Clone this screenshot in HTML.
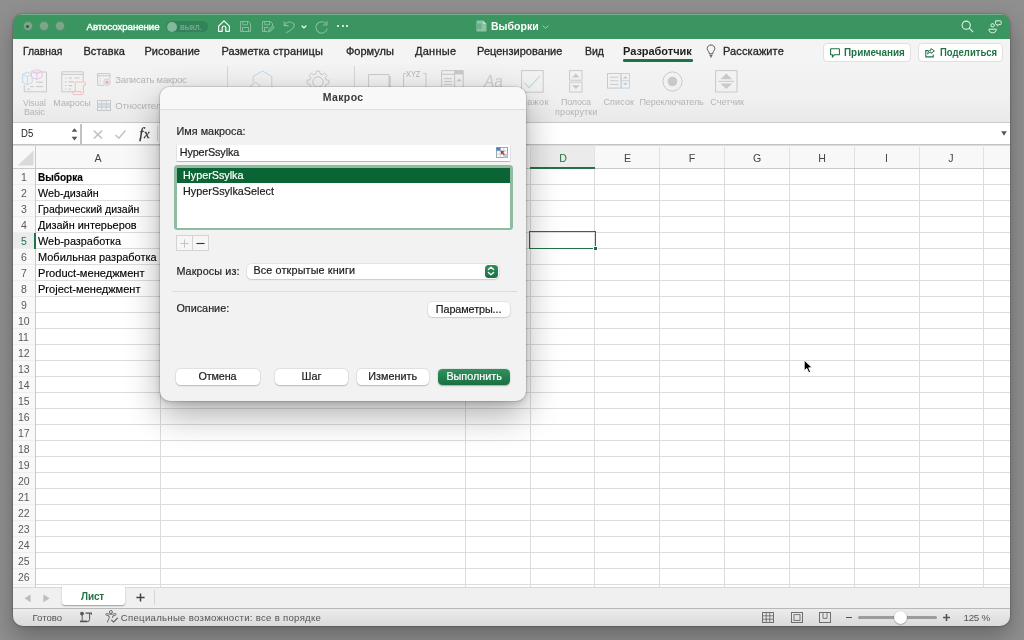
<!DOCTYPE html>
<html lang="ru"><head><meta charset="utf-8"><title>Выборки</title>
<style>
*{box-sizing:border-box;margin:0;padding:0}
html,body{width:1024px;height:640px;overflow:hidden}
body{background:#8f8f8f;font-family:"Liberation Sans",sans-serif;font-size:11px;color:#262626;position:relative}
.t{position:absolute;white-space:nowrap}
#win,#layer{will-change:transform}
.r{position:absolute;display:block}
#shadow{position:absolute;left:13px;top:14px;width:997px;height:612px;border-radius:10px;box-shadow:0 0 0 1px rgba(0,0,0,.10),0 11px 24px rgba(0,0,0,.27),0 1px 5px rgba(0,0,0,.09)}
#win{position:absolute;left:0;top:0;width:1024px;height:640px;clip-path:inset(14px 14px 14px 13px round 10px);background:#f3f3f3}
#dlg{position:absolute;left:160px;top:87px;width:366px;height:314px;border-radius:10px;background:#f2f2f2;box-shadow:0 0 0 1px rgba(0,0,0,.10),0 14px 34px rgba(0,0,0,.32),0 2px 6px rgba(0,0,0,.16)}
#layer{position:absolute;left:0;top:0;width:1024px;height:640px}
</style></head><body>
<div id="shadow"></div>
<div id="win">
<div class="r" style="left:13px;top:14px;width:997px;height:25px;background:#3b9561;"></div>
<div class="r" style="left:13px;top:14px;width:997px;height:1px;background:rgba(255,255,255,.28);"></div>
<div class="r" style="left:22.55px;top:21px;width:10.4px;height:10.4px;background:#79a78b;border-radius:50%;box-shadow:inset 0 0 0 0.8px rgba(40,100,65,.45)"></div>
<div class="r" style="left:38.55px;top:21px;width:10.4px;height:10.4px;background:#79a78b;border-radius:50%;box-shadow:inset 0 0 0 0.8px rgba(40,100,65,.45)"></div>
<div class="r" style="left:54.8px;top:21px;width:10.4px;height:10.4px;background:#79a78b;border-radius:50%;box-shadow:inset 0 0 0 0.8px rgba(40,100,65,.45)"></div>
<div class="r" style="left:26.3px;top:24.8px;width:3px;height:3px;background:#33573f;border-radius:50%"></div>
<div class="t" style="left:86.50px;top:22.34px;font-size:9.7px;line-height:9.7px;color:#fff;-webkit-text-stroke:0.4px #fff;letter-spacing:-0.059px;">Автосохранение</div>
<div class="r" style="left:166px;top:21px;width:42px;height:11px;background:#33835a;border-radius:6px"></div>
<div class="r" style="left:167px;top:21.5px;width:10px;height:10px;background:#84b89b;border-radius:50%"></div>
<div class="t" style="left:180.00px;top:23.82px;font-size:7px;line-height:7px;color:#7bab91;font-weight:bold;transform:scaleX(0.9333);transform-origin:0 0;">ВЫКЛ.</div>
<svg class="r" style="left:217px;top:19px;" width="14" height="14" viewBox="0 0 14 14" fill="none"><path d="M1.6 7.2 L7 1.8 L12.4 7.2 V12.3 H8.8 V8.6 Q8.8 7 7 7 Q5.2 7 5.2 8.6 V12.3 H1.6 Z" stroke="#fff" stroke-width="1.15" stroke-linejoin="round"/></svg>
<svg class="r" style="left:239px;top:20px;" width="13" height="13" viewBox="0 0 13 13" fill="none"><path d="M1.5 1.5 H9.5 L11.5 3.5 V11.5 H1.5 Z" stroke="#86bd9f" stroke-width="1"/><path d="M3.8 1.5 V4.8 H8.6 V1.5 M3.5 11.5 V7.5 H9.5 V11.5" stroke="#86bd9f" stroke-width="1"/></svg>
<svg class="r" style="left:260.5px;top:20px;" width="14" height="13" viewBox="0 0 14 13" fill="none"><path d="M1.5 1.5 H9.5 L11.5 3.5 V6 M6 11.5 H1.5 V1.5" stroke="#86bd9f" stroke-width="1"/><path d="M3.8 1.5 V4.8 H8.6 V1.5 M3.5 11.5 V7.5 H7.5" stroke="#86bd9f" stroke-width="1"/><path d="M7 12 L7.6 9.8 L11.6 5.9 L13.2 7.5 L9.2 11.4 Z" stroke="#86bd9f" stroke-width="1" fill="#86bd9f" fill-opacity=".5"/></svg>
<svg class="r" style="left:283px;top:19.5px;" width="13" height="14" viewBox="0 0 13 14" fill="none"><path d="M1.2 1.2 V5.6 H5.6" stroke="#86bd9f" stroke-width="1.1"/><path d="M1.6 5.2 C3.5 1.8 8 0.9 10.3 3.3 C12.6 5.8 10.8 8.8 3.2 12.8" stroke="#86bd9f" stroke-width="1.1"/></svg>
<svg class="r" style="left:301px;top:25px;" width="6" height="4" viewBox="0 0 6 4" fill="none"><path d="M0.7 0.6 L3 2.9 L5.3 0.6" stroke="#fff" stroke-width="1.3"/></svg>
<svg class="r" style="left:313.5px;top:19.5px;" width="15" height="14" viewBox="0 0 15 14" fill="none"><path d="M12.9 1 V5 H8.9" stroke="#86bd9f" stroke-width="1.1"/><path d="M12.6 4.6 A5.7 5.7 0 1 0 13.2 8.6" stroke="#86bd9f" stroke-width="1.1"/></svg>
<div class="r" style="left:337.3px;top:25.4px;width:2.1px;height:2.1px;background:#fff;border-radius:50%"></div>
<div class="r" style="left:341.5px;top:25.4px;width:2.1px;height:2.1px;background:#fff;border-radius:50%"></div>
<div class="r" style="left:345.7px;top:25.4px;width:2.1px;height:2.1px;background:#fff;border-radius:50%"></div>
<svg class="r" style="left:475.5px;top:20px;" width="11" height="12" viewBox="0 0 11 12" fill="none"><path d="M0.5 0.5 H7 L10.5 4 V11.5 H0.5 Z" fill="#8cc3a5"/><path d="M7 0.5 V4 H10.5 Z" fill="#b6dcc6"/><rect x="0" y="3.5" width="5.6" height="5.6" fill="#6fae8c"/></svg>
<div class="t" style="left:490.80px;top:21.34px;font-size:11px;line-height:11px;color:#fff;font-weight:bold;transform:scaleX(0.9551);transform-origin:0 0;">Выборки</div>
<svg class="r" style="left:541.5px;top:24.6px;" width="7" height="4" viewBox="0 0 7 4" fill="none"><path d="M0.5 0.6 L3.5 3.3 L6.5 0.6" stroke="#9ccbb0" stroke-width="1"/></svg>
<svg class="r" style="left:961px;top:20px;" width="13" height="13" viewBox="0 0 13 13" fill="none"><circle cx="5.2" cy="5.2" r="4.1" stroke="#e4f1ea" stroke-width="1.1"/><path d="M8.2 8.2 L12.2 12.2" stroke="#e4f1ea" stroke-width="1.1"/></svg>
<svg class="r" style="left:987.5px;top:19.5px;" width="14" height="14" viewBox="0 0 14 14" fill="none"><rect x="3" y="3.8" width="3.2" height="3" rx="1" stroke="#e4f1ea" stroke-width="1"/><path d="M0.9 9.2 H8.3 C8.3 11.6 6.6 12.8 4.6 12.8 C2.6 12.8 0.9 11.6 0.9 9.2 Z" stroke="#e4f1ea" stroke-width="1"/><path d="M7.6 0.8 H12.2 Q13.2 0.8 13.2 1.8 V3.6 Q13.2 4.6 12.2 4.6 H10.8 L9.4 5.9 V4.6 H8.6 Q7.6 4.6 7.6 3.6 Z" stroke="#e4f1ea" stroke-width="1"/></svg>
<div class="r" style="left:13px;top:39px;width:997px;height:25px;background:#f4f4f4;"></div>
<div class="t" style="left:23.00px;top:45.64px;font-size:11px;line-height:11px;color:#262626;-webkit-text-stroke:0.3px #262626;transform:scaleX(0.9415);transform-origin:0 0;">Главная</div>
<div class="t" style="left:83.40px;top:45.64px;font-size:11px;line-height:11px;color:#262626;-webkit-text-stroke:0.3px #262626;letter-spacing:0.106px;">Вставка</div>
<div class="t" style="left:144.40px;top:45.64px;font-size:11px;line-height:11px;color:#262626;-webkit-text-stroke:0.3px #262626;letter-spacing:0.025px;">Рисование</div>
<div class="t" style="left:221.50px;top:45.64px;font-size:11px;line-height:11px;color:#262626;-webkit-text-stroke:0.3px #262626;letter-spacing:0.100px;">Разметка страницы</div>
<div class="t" style="left:346.00px;top:45.64px;font-size:11px;line-height:11px;color:#262626;-webkit-text-stroke:0.3px #262626;">Формулы</div>
<div class="t" style="left:415.00px;top:45.64px;font-size:11px;line-height:11px;color:#262626;-webkit-text-stroke:0.3px #262626;letter-spacing:0.252px;">Данные</div>
<div class="t" style="left:477.00px;top:45.64px;font-size:11px;line-height:11px;color:#262626;-webkit-text-stroke:0.3px #262626;letter-spacing:0.025px;">Рецензирование</div>
<div class="t" style="left:585.00px;top:45.64px;font-size:11px;line-height:11px;color:#262626;-webkit-text-stroke:0.3px #262626;transform:scaleX(0.9548);transform-origin:0 0;">Вид</div>
<div class="t" style="left:623.00px;top:45.64px;font-size:11px;line-height:11px;color:#1d1d1d;font-weight:bold;letter-spacing:-0.031px;">Разработчик</div>
<div class="r" style="left:623px;top:59px;width:70px;height:2.5px;background:#217346;border-radius:1.25px"></div>
<svg class="r" style="left:706px;top:44px;" width="10" height="14" viewBox="0 0 10 14" fill="none"><path d="M5 1 C2.6 1 1.2 2.7 1.2 4.6 C1.2 6.2 2.3 7 2.9 8 C3.2 8.6 3.3 9.2 3.3 9.8 H6.7 C6.7 9.2 6.8 8.6 7.1 8 C7.7 7 8.8 6.2 8.8 4.6 C8.8 2.7 7.4 1 5 1 Z M3.6 11.4 H6.4 M4 12.8 H6" stroke="#444" stroke-width="0.9"/></svg>
<div class="t" style="left:723.00px;top:45.64px;font-size:11px;line-height:11px;color:#262626;-webkit-text-stroke:0.3px #262626;letter-spacing:0.106px;">Расскажите</div>
<div class="r" style="left:823px;top:42.5px;width:87.5px;height:19px;background:#fff;border-radius:4px;border:1px solid #e0e0e0"></div>
<div class="r" style="left:918px;top:42.5px;width:84.5px;height:19px;background:#fff;border-radius:4px;border:1px solid #e0e0e0"></div>
<svg class="r" style="left:830px;top:47.5px;" width="10" height="10" viewBox="0 0 10 10" fill="none"><path d="M1 0.8 H9 Q9.4 0.8 9.4 1.2 V6.4 Q9.4 6.8 9 6.8 H4.4 L2.4 8.9 V6.8 H1 Q0.6 6.8 0.6 6.4 V1.2 Q0.6 0.8 1 0.8 Z" stroke="#217346" stroke-width="1.1"/></svg>
<div class="t" style="left:844.20px;top:47.16px;font-size:10.5px;line-height:10.5px;color:#217346;font-weight:bold;transform:scaleX(0.9402);transform-origin:0 0;">Примечания</div>
<svg class="r" style="left:925px;top:47.5px;" width="10" height="10" viewBox="0 0 10 10" fill="none"><path d="M3.6 2.6 H0.8 V8.9 H8.2 V6.6" stroke="#217346" stroke-width="1.1"/><path d="M6 0.6 L9.4 3 L6 5.4 V4 C4.4 4 3.4 4.8 2.8 6.2 C2.8 3.8 4 2.2 6 2 Z" stroke="#217346" stroke-width="1" stroke-linejoin="round"/></svg>
<div class="t" style="left:939.90px;top:47.16px;font-size:10.5px;line-height:10.5px;color:#217346;font-weight:bold;transform:scaleX(0.9057);transform-origin:0 0;">Поделиться</div>
<div class="r" style="left:13px;top:64px;width:997px;height:59px;background:linear-gradient(#f3f3f3,#f0f0f0 60%,#e9e9e9);"></div>
<svg class="r" style="left:22px;top:68.5px;" width="26" height="24" viewBox="0 0 26 24" fill="none"><path d="M11 3 H24.5 V22.8 H2.3 V16" stroke="#c9c9c9" stroke-width="1"/><path d="M14 13.2 H21 M8 17.6 H12 M14 17.6 H21 M5 20.2 H8" stroke="#c9c9c9" stroke-width="1"/><path d="M0.6 5.4 L5.4 3.2 L10.2 5.4 V13.4 L5.4 15.8 L0.6 13.4 Z M0.6 5.4 L5.4 7.6 L10.2 5.4 M5.4 7.6 V15.8" stroke="#b9d7ee" stroke-width="0.9"/><path d="M9.6 2.6 L14.8 0.6 L20 2.6 V8.2 L14.8 10.4 L9.6 8.2 Z M9.6 2.6 L14.8 4.8 L20 2.6 M14.8 4.8 V10.4" stroke="#e3bfe6" stroke-width="0.9" fill="#f3f3f3"/></svg>
<div class="t" style="left:23.20px;top:98.53px;font-size:9px;line-height:9px;color:#b4b4b4;transform:scaleX(0.9342);transform-origin:0 0;">Visual</div>
<div class="t" style="left:24.00px;top:107.63px;font-size:9px;line-height:9px;color:#b4b4b4;letter-spacing:-0.252px;">Basic</div>
<svg class="r" style="left:60.5px;top:70.5px;" width="26" height="25" viewBox="0 0 26 25" fill="none"><path d="M12 20.8 H0.8 V0.8 H22.2 V10" stroke="#c9c9c9" stroke-width="1"/><path d="M0.8 3.4 H22.2" stroke="#c9c9c9" stroke-width="1"/><path d="M4 7 H5.4 M7.6 7 H11 M13 7 H18.6 M4 10.8 H5.4 M7.6 10.8 H13 M4 14.6 H5.4 M7.6 14.6 H11 M4 18 H5.4 M7.6 18 H10" stroke="#c9c9c9" stroke-width="1.2"/><path d="M14.2 20.6 V12 Q14.2 11 15.2 11 H23 Q24.4 11 24.4 12.6 V14.2 H22.4 V22 Q22.4 23.6 20.8 23.6 H13 Q11.8 23.6 11.8 22.2 V20.6 H20 V22.2" stroke="#f3b6b6" stroke-width="0.9"/></svg>
<div class="t" style="left:53.30px;top:98.53px;font-size:9px;line-height:9px;color:#b4b4b4;">Макросы</div>
<svg class="r" style="left:97px;top:73px;" width="14" height="13" viewBox="0 0 14 13" fill="none"><path d="M7 12.3 H0.6 V0.6 H13 V5.6 M0.6 2.8 H13" stroke="#c9c9c9" stroke-width="1"/><path d="M2.6 5.4 H3.6 M2.6 7.8 H3.6 M2.6 10 H3.6" stroke="#c9c9c9" stroke-width="1"/><circle cx="10" cy="9.2" r="3.3" stroke="#c9c9c9" stroke-width="0.9"/><circle cx="10" cy="9.2" r="1.7" fill="#f1a9a9"/></svg>
<div class="t" style="left:115.30px;top:75.31px;font-size:9.5px;line-height:9.5px;color:#b4b4b4;letter-spacing:-0.217px;">Записать макрос</div>
<svg class="r" style="left:97px;top:100px;" width="14" height="11" viewBox="0 0 14 11" fill="none"><rect x="0.5" y="0.5" width="13" height="10" stroke="#c9c9c9"/><rect x="1" y="3.8" width="12" height="3.4" fill="#cfe2f3"/><path d="M0.5 3.8 H13.5 M0.5 7.2 H13.5 M4.8 0.5 V10.5 M9.2 0.5 V10.5" stroke="#c9c9c9" stroke-width="0.9"/></svg>
<div class="t" style="left:115.30px;top:101.11px;font-size:9.5px;line-height:9.5px;color:#b4b4b4;letter-spacing:-0.147px;">Относительные ссылки</div>
<div class="r" style="left:227px;top:66px;width:1px;height:52px;background:#d6d6d6;"></div>
<div class="r" style="left:353.5px;top:66px;width:1px;height:52px;background:#d6d6d6;"></div>
<svg class="r" style="left:250px;top:69.5px;" width="25" height="22" viewBox="0 0 25 22" fill="none"><path d="M12.5 1 L21.8 6.4 V17.2 M3.2 12 V6.4 L12.5 1" stroke="#b9d4ea" stroke-width="0.9"/><path d="M5.4 12.4 L9.8 15 V20 M1 20 V15 L5.4 12.4" stroke="#b9d4ea" stroke-width="0.9"/></svg>
<svg class="r" style="left:306px;top:69px;" width="24" height="26" viewBox="0 0 24 26" fill="none"><path d="M9.9 4.9 L10.2 2.1 L13.8 2.1 L14.1 4.9 L16.3 5.8 L18.4 4.1 L20.9 6.6 L19.2 8.7 L20.1 10.9 L22.9 11.2 L22.9 14.8 L20.1 15.1 L19.2 17.3 L20.9 19.4 L18.4 21.9 L16.3 20.2 L14.1 21.1 L13.8 23.9 L10.2 23.9 L9.9 21.1 L7.7 20.2 L5.6 21.9 L3.1 19.4 L4.8 17.3 L3.9 15.1 L1.1 14.8 L1.1 11.2 L3.9 10.9 L4.8 8.7 L3.1 6.6 L5.6 4.1 L7.7 5.8 Z" stroke="#c9c9c9" stroke-width="1" stroke-linejoin="round"/><circle cx="12" cy="13" r="5.2" stroke="#c9c9c9" stroke-width="1"/></svg>
<svg class="r" style="left:367.5px;top:74px;" width="23" height="14" viewBox="0 0 23 14" fill="none"><path d="M0.6 14 V0.6 H21 V14" stroke="#c9c9c9" stroke-width="1"/><path d="M22 2 V14" stroke="#c9c9c9" stroke-width="1.4"/></svg>
<svg class="r" style="left:402.5px;top:69px;" width="24" height="20" viewBox="0 0 24 20" fill="none"><path d="M3.6 4.6 H0.6 V20 M20.4 4.6 H23 V20" stroke="#c9c9c9" stroke-width="1"/></svg>
<div class="t" style="left:406.40px;top:69.84px;font-size:8.4px;line-height:8.4px;color:#b4b4b4;transform:scaleX(0.8815);transform-origin:0 0;">XYZ</div>
<svg class="r" style="left:440.5px;top:70px;" width="23" height="18" viewBox="0 0 23 18" fill="none"><path d="M0.6 18 V0.6 H22.2 V18 M0.6 4.2 H13.6 M13.6 0.6 V18" stroke="#c9c9c9" stroke-width="1"/><rect x="13.6" y="0.6" width="8.6" height="3.8" fill="#c9c9c9"/><path d="M3 8.6 H11 M3 11.6 H11 M3 14.6 H11" stroke="#c9c9c9" stroke-width="1"/><path d="M15.4 11.2 L18 8.4 L20.6 11.2 Z" fill="#c9c9c9"/></svg>
<div class="t" style="left:484.00px;top:73.16px;font-size:17px;line-height:17px;color:#cfcfcf;transform:scaleX(0.9137);transform-origin:0 0;font-style:italic;">Aa</div>
<svg class="r" style="left:521px;top:70px;" width="23" height="23" viewBox="0 0 23 23" fill="none"><rect x="0.6" y="0.6" width="21.6" height="21.6" stroke="#c9c9c9" stroke-width="1"/><path d="M3.4 12.6 L8 17.6 L19.4 5.6" stroke="#bfe0cb" stroke-width="1.1"/></svg>
<div class="t" style="left:514.50px;top:98.33px;font-size:9px;line-height:9px;color:#b4b4b4;letter-spacing:0.428px;">Флажок</div>
<svg class="r" style="left:569px;top:70px;" width="14" height="23" viewBox="0 0 14 23" fill="none"><rect x="0.6" y="0.6" width="12.4" height="9.6" stroke="#c9c9c9" stroke-width="1"/><rect x="0.6" y="12.2" width="12.4" height="9.8" stroke="#c9c9c9" stroke-width="1"/><path d="M3 7.4 L6.8 3.4 L10.6 7.4 Z M3 15.2 L6.8 19.2 L10.6 15.2 Z" fill="#c9c9c9"/></svg>
<div class="t" style="left:561.00px;top:98.33px;font-size:9px;line-height:9px;color:#b4b4b4;letter-spacing:-0.207px;">Полоса</div>
<div class="t" style="left:555.00px;top:107.63px;font-size:9px;line-height:9px;color:#b4b4b4;letter-spacing:0.136px;">прокрутки</div>
<svg class="r" style="left:607px;top:73px;" width="23" height="16" viewBox="0 0 23 16" fill="none"><rect x="0.5" y="0.5" width="13.6" height="14.6" stroke="#c9c9c9"/><path d="M3 4.2 H11.4 M3 7.8 H11.4 M3 11.4 H11.4" stroke="#c9c9c9" stroke-width="1"/><rect x="14.1" y="0.5" width="8.4" height="14.6" stroke="#bcd6ea"/><path d="M14.1 7.8 H22.5" stroke="#bcd6ea"/><path d="M15.8 5.6 L18.3 3 L20.8 5.6 Z M15.8 10 L18.3 12.6 L20.8 10 Z" fill="#c9c9c9"/></svg>
<div class="t" style="left:603.40px;top:98.33px;font-size:9px;line-height:9px;color:#b4b4b4;letter-spacing:0.131px;">Список</div>
<svg class="r" style="left:661.5px;top:71px;" width="21" height="21" viewBox="0 0 21 21" fill="none"><circle cx="10.5" cy="10.5" r="9.6" stroke="#c9c9c9" stroke-width="1"/><circle cx="10.5" cy="10.5" r="4.8" fill="#c9c9c9"/></svg>
<div class="t" style="left:639.50px;top:98.33px;font-size:9px;line-height:9px;color:#b4b4b4;letter-spacing:-0.099px;">Переключатель</div>
<svg class="r" style="left:715px;top:69.5px;" width="23" height="23" viewBox="0 0 23 23" fill="none"><rect x="0.6" y="0.6" width="21.4" height="21.4" stroke="#c9c9c9" stroke-width="1"/><path d="M3.4 11.3 H19.2" stroke="#c9c9c9" stroke-width="1"/><path d="M5.4 9.2 L11.3 3.6 L17.2 9.2 Z M5.4 13.4 L11.3 19 L17.2 13.4 Z" fill="#c9c9c9"/></svg>
<div class="t" style="left:710.30px;top:98.33px;font-size:9px;line-height:9px;color:#b4b4b4;letter-spacing:0.005px;">Счетчик</div>
<div class="r" style="left:13px;top:123px;width:997px;height:21px;background:#fff;"></div>
<div class="r" style="left:13px;top:122px;width:997px;height:1px;background:#c9c9c9;"></div>
<div class="r" style="left:13px;top:144px;width:997px;height:1px;background:#c3c3c3;"></div>
<div class="r" style="left:13px;top:145px;width:997px;height:1.4px;background:#dddddd;"></div>
<div class="r" style="left:80px;top:123.5px;width:1.5px;height:20px;background:#c2c2c2;"></div>
<div class="t" style="left:21.00px;top:128.63px;font-size:10.3px;line-height:10.3px;color:#222;transform:scaleX(0.9266);transform-origin:0 0;">D5</div>
<svg class="r" style="left:70.5px;top:127.5px;" width="7" height="13" viewBox="0 0 7 13" fill="none"><path d="M0.6 3.8 L3.5 0.3 L6.4 3.8 Z M0.6 8.8 L3.5 12.4 L6.4 8.8 Z" fill="#555"/></svg>
<svg class="r" style="left:92.5px;top:129.5px;" width="10" height="9" viewBox="0 0 10 9" fill="none"><path d="M0.8 0.6 L9 8.6 M9 0.6 L0.8 8.6" stroke="#c4c4c4" stroke-width="1.55"/></svg>
<svg class="r" style="left:115px;top:130px;" width="11" height="9" viewBox="0 0 11 9" fill="none"><path d="M0.6 5 L3.8 8.2 L10.4 0.6" stroke="#c4c4c4" stroke-width="1.55"/></svg>
<div class="t" style="left:139.30px;top:126.45px;font-size:15px;line-height:15px;color:#383838;-webkit-text-stroke:0.3px #383838;font-family:'Liberation Serif',serif;font-style:italic;">f<span style="font-size:12.5px;margin-left:0.6px">x</span></div>
<div class="r" style="left:156.5px;top:126px;width:1px;height:15px;background:#dcdcdc;"></div>
<svg class="r" style="left:1001.3px;top:131.3px;" width="6" height="5" viewBox="0 0 6 5" fill="none"><path d="M0.2 0.2 H5.8 L3 4.7 Z" fill="#555"/></svg>
<div class="r" style="left:13px;top:146px;width:997px;height:441px;background:#fff;"></div>
<div class="r" style="left:13px;top:146px;width:997px;height:22px;background:#f8f8f8;"></div>
<div class="r" style="left:13px;top:168px;width:22px;height:419px;background:#f8f8f8;"></div>
<div class="r" style="left:530px;top:146px;width:65px;height:22px;background:#ebebeb;"></div>
<div class="r" style="left:13px;top:233px;width:22px;height:16px;background:#ebebeb;"></div>
<div class="r" style="left:36px;top:168px;width:974px;height:419px;background:repeating-linear-gradient(to bottom,#dcdcdc 0,#dcdcdc 1px,transparent 1px,transparent 16px);"></div>
<div class="r" style="left:13px;top:168px;width:22px;height:419px;background:repeating-linear-gradient(to bottom,#eeeeee 0,#eeeeee 1px,transparent 1px,transparent 16px);"></div>
<div class="r" style="left:13px;top:168px;width:997px;height:1px;background:#c9c9c9;"></div>
<div class="r" style="left:160px;top:169px;width:1px;height:418px;background:#dcdcdc;"></div>
<div class="r" style="left:160px;top:147px;width:1px;height:21px;background:#e2e2e2;"></div>
<div class="r" style="left:465px;top:169px;width:1px;height:418px;background:#dcdcdc;"></div>
<div class="r" style="left:465px;top:147px;width:1px;height:21px;background:#e2e2e2;"></div>
<div class="r" style="left:530px;top:169px;width:1px;height:418px;background:#dcdcdc;"></div>
<div class="r" style="left:530px;top:147px;width:1px;height:21px;background:#e2e2e2;"></div>
<div class="r" style="left:594px;top:169px;width:1px;height:418px;background:#dcdcdc;"></div>
<div class="r" style="left:594px;top:147px;width:1px;height:21px;background:#e2e2e2;"></div>
<div class="r" style="left:659px;top:169px;width:1px;height:418px;background:#dcdcdc;"></div>
<div class="r" style="left:659px;top:147px;width:1px;height:21px;background:#e2e2e2;"></div>
<div class="r" style="left:724px;top:169px;width:1px;height:418px;background:#dcdcdc;"></div>
<div class="r" style="left:724px;top:147px;width:1px;height:21px;background:#e2e2e2;"></div>
<div class="r" style="left:789px;top:169px;width:1px;height:418px;background:#dcdcdc;"></div>
<div class="r" style="left:789px;top:147px;width:1px;height:21px;background:#e2e2e2;"></div>
<div class="r" style="left:854px;top:169px;width:1px;height:418px;background:#dcdcdc;"></div>
<div class="r" style="left:854px;top:147px;width:1px;height:21px;background:#e2e2e2;"></div>
<div class="r" style="left:919px;top:169px;width:1px;height:418px;background:#dcdcdc;"></div>
<div class="r" style="left:919px;top:147px;width:1px;height:21px;background:#e2e2e2;"></div>
<div class="r" style="left:983px;top:169px;width:1px;height:418px;background:#dcdcdc;"></div>
<div class="r" style="left:983px;top:147px;width:1px;height:21px;background:#e2e2e2;"></div>
<div class="r" style="left:35px;top:146px;width:1px;height:441px;background:#c9c9c9;"></div>
<svg class="r" style="left:17px;top:150px;" width="17" height="16" viewBox="0 0 17 16" fill="none"><path d="M16.6 0.4 V15.6 H0.6 Z" fill="#dadada"/></svg>
<div class="t" style="left:94.46px;top:152.98px;font-size:10.6px;line-height:10.6px;color:#444;">A</div>
<div class="t" style="left:623.96px;top:152.98px;font-size:10.6px;line-height:10.6px;color:#444;">E</div>
<div class="t" style="left:688.76px;top:152.98px;font-size:10.6px;line-height:10.6px;color:#444;">F</div>
<div class="t" style="left:752.88px;top:152.98px;font-size:10.6px;line-height:10.6px;color:#444;">G</div>
<div class="t" style="left:818.17px;top:152.98px;font-size:10.6px;line-height:10.6px;color:#444;">H</div>
<div class="t" style="left:885.03px;top:152.98px;font-size:10.6px;line-height:10.6px;color:#444;">I</div>
<div class="t" style="left:948.35px;top:152.98px;font-size:10.6px;line-height:10.6px;color:#444;">J</div>
<div class="t" style="left:559.17px;top:152.98px;font-size:10.6px;line-height:10.6px;color:#217346;">D</div>
<div class="r" style="left:530px;top:167px;width:65px;height:2px;background:#217346;"></div>
<div class="t" style="left:20.87px;top:171.67px;font-size:11.2px;line-height:11.2px;color:#5a5a5a;transform:scaleX(0.9400);transform-origin:0 0;">1</div>
<div class="t" style="left:20.87px;top:187.67px;font-size:11.2px;line-height:11.2px;color:#5a5a5a;transform:scaleX(0.9400);transform-origin:0 0;">2</div>
<div class="t" style="left:20.87px;top:203.67px;font-size:11.2px;line-height:11.2px;color:#5a5a5a;transform:scaleX(0.9400);transform-origin:0 0;">3</div>
<div class="t" style="left:20.87px;top:219.67px;font-size:11.2px;line-height:11.2px;color:#5a5a5a;transform:scaleX(0.9400);transform-origin:0 0;">4</div>
<div class="t" style="left:20.87px;top:235.67px;font-size:11.2px;line-height:11.2px;color:#217346;transform:scaleX(0.9400);transform-origin:0 0;">5</div>
<div class="t" style="left:20.87px;top:251.67px;font-size:11.2px;line-height:11.2px;color:#5a5a5a;transform:scaleX(0.9400);transform-origin:0 0;">6</div>
<div class="t" style="left:20.87px;top:267.67px;font-size:11.2px;line-height:11.2px;color:#5a5a5a;transform:scaleX(0.9400);transform-origin:0 0;">7</div>
<div class="t" style="left:20.87px;top:283.67px;font-size:11.2px;line-height:11.2px;color:#5a5a5a;transform:scaleX(0.9400);transform-origin:0 0;">8</div>
<div class="t" style="left:20.87px;top:299.67px;font-size:11.2px;line-height:11.2px;color:#5a5a5a;transform:scaleX(0.9400);transform-origin:0 0;">9</div>
<div class="t" style="left:17.94px;top:315.67px;font-size:11.2px;line-height:11.2px;color:#5a5a5a;transform:scaleX(0.9400);transform-origin:0 0;">10</div>
<div class="t" style="left:17.94px;top:331.67px;font-size:11.2px;line-height:11.2px;color:#5a5a5a;transform:scaleX(0.9400);transform-origin:0 0;">11</div>
<div class="t" style="left:17.94px;top:347.67px;font-size:11.2px;line-height:11.2px;color:#5a5a5a;transform:scaleX(0.9400);transform-origin:0 0;">12</div>
<div class="t" style="left:17.94px;top:363.67px;font-size:11.2px;line-height:11.2px;color:#5a5a5a;transform:scaleX(0.9400);transform-origin:0 0;">13</div>
<div class="t" style="left:17.94px;top:379.67px;font-size:11.2px;line-height:11.2px;color:#5a5a5a;transform:scaleX(0.9400);transform-origin:0 0;">14</div>
<div class="t" style="left:17.94px;top:395.67px;font-size:11.2px;line-height:11.2px;color:#5a5a5a;transform:scaleX(0.9400);transform-origin:0 0;">15</div>
<div class="t" style="left:17.94px;top:411.67px;font-size:11.2px;line-height:11.2px;color:#5a5a5a;transform:scaleX(0.9400);transform-origin:0 0;">16</div>
<div class="t" style="left:17.94px;top:427.67px;font-size:11.2px;line-height:11.2px;color:#5a5a5a;transform:scaleX(0.9400);transform-origin:0 0;">17</div>
<div class="t" style="left:17.94px;top:443.67px;font-size:11.2px;line-height:11.2px;color:#5a5a5a;transform:scaleX(0.9400);transform-origin:0 0;">18</div>
<div class="t" style="left:17.94px;top:459.67px;font-size:11.2px;line-height:11.2px;color:#5a5a5a;transform:scaleX(0.9400);transform-origin:0 0;">19</div>
<div class="t" style="left:17.94px;top:475.67px;font-size:11.2px;line-height:11.2px;color:#5a5a5a;transform:scaleX(0.9400);transform-origin:0 0;">20</div>
<div class="t" style="left:17.94px;top:491.67px;font-size:11.2px;line-height:11.2px;color:#5a5a5a;transform:scaleX(0.9400);transform-origin:0 0;">21</div>
<div class="t" style="left:17.94px;top:507.67px;font-size:11.2px;line-height:11.2px;color:#5a5a5a;transform:scaleX(0.9400);transform-origin:0 0;">22</div>
<div class="t" style="left:17.94px;top:523.67px;font-size:11.2px;line-height:11.2px;color:#5a5a5a;transform:scaleX(0.9400);transform-origin:0 0;">23</div>
<div class="t" style="left:17.94px;top:539.67px;font-size:11.2px;line-height:11.2px;color:#5a5a5a;transform:scaleX(0.9400);transform-origin:0 0;">24</div>
<div class="t" style="left:17.94px;top:555.67px;font-size:11.2px;line-height:11.2px;color:#5a5a5a;transform:scaleX(0.9400);transform-origin:0 0;">25</div>
<div class="t" style="left:17.94px;top:571.67px;font-size:11.2px;line-height:11.2px;color:#5a5a5a;transform:scaleX(0.9400);transform-origin:0 0;">26</div>
<div class="r" style="left:34px;top:232.5px;width:2px;height:16.5px;background:#217346;"></div>
<div class="t" style="left:38.20px;top:171.43px;font-size:11.6px;line-height:11.6px;color:#000;font-weight:bold;-webkit-text-stroke:0.15px #000;transform:scaleX(0.8636);transform-origin:0 0;">Выборка</div>
<div class="t" style="left:38.20px;top:187.43px;font-size:11.6px;line-height:11.6px;color:#000;-webkit-text-stroke:0.15px #000;transform:scaleX(0.9296);transform-origin:0 0;">Web-дизайн</div>
<div class="t" style="left:38.20px;top:203.43px;font-size:11.6px;line-height:11.6px;color:#000;-webkit-text-stroke:0.15px #000;transform:scaleX(0.9053);transform-origin:0 0;">Графический дизайн</div>
<div class="t" style="left:38.20px;top:219.43px;font-size:11.6px;line-height:11.6px;color:#000;-webkit-text-stroke:0.15px #000;transform:scaleX(0.9421);transform-origin:0 0;">Дизайн интерьеров</div>
<div class="t" style="left:38.20px;top:235.43px;font-size:11.6px;line-height:11.6px;color:#000;-webkit-text-stroke:0.15px #000;transform:scaleX(0.9395);transform-origin:0 0;">Web-разработка</div>
<div class="t" style="left:38.20px;top:251.43px;font-size:11.6px;line-height:11.6px;color:#000;-webkit-text-stroke:0.15px #000;transform:scaleX(0.9460);transform-origin:0 0;">Мобильная разработка</div>
<div class="t" style="left:38.20px;top:267.43px;font-size:11.6px;line-height:11.6px;color:#000;-webkit-text-stroke:0.15px #000;transform:scaleX(0.9553);transform-origin:0 0;">Product-менеджмент</div>
<div class="t" style="left:38.20px;top:283.43px;font-size:11.6px;line-height:11.6px;color:#000;-webkit-text-stroke:0.15px #000;transform:scaleX(0.9525);transform-origin:0 0;">Project-менеджмент</div>
<div class="r" style="left:529px;top:231.3px;width:66.8px;height:17.8px;background:transparent;border:1.6px solid #217346"></div>
<div class="r" style="left:592.5px;top:246px;width:5px;height:5px;background:#1e7145;border:1px solid #fff"></div>
<div class="r" style="left:13px;top:587px;width:997px;height:21px;background:#f0f0f0;"></div>
<div class="r" style="left:13px;top:587px;width:997px;height:1px;background:#d9d9d9;"></div>
<div class="r" style="left:61.7px;top:587px;width:63px;height:18px;background:#fff;border-radius:0 0 3px 3px;box-shadow:0 0.5px 1.5px rgba(0,0,0,.35)"></div>
<div class="r" style="left:61.5px;top:586px;width:63px;height:2px;background:#fff;"></div>
<div class="t" style="left:81.00px;top:592.48px;font-size:10px;line-height:10px;color:#217346;font-weight:bold;letter-spacing:-0.141px;">Лист</div>
<svg class="r" style="left:23.8px;top:593.5px;" width="7" height="9" viewBox="0 0 7 9" fill="none"><path d="M6.6 0.4 V8.2 L0.4 4.3 Z" fill="#bcbcbc"/></svg>
<svg class="r" style="left:42.5px;top:593.5px;" width="7" height="9" viewBox="0 0 7 9" fill="none"><path d="M0.4 0.4 V8.2 L6.6 4.3 Z" fill="#bcbcbc"/></svg>
<svg class="r" style="left:135.5px;top:593px;" width="9" height="9" viewBox="0 0 9 9" fill="none"><path d="M4.5 0.4 V8.6 M0.4 4.5 H8.6" stroke="#444" stroke-width="1.5"/></svg>
<div class="r" style="left:153.5px;top:590px;width:1px;height:15px;background:#d6d6d6;"></div>
<div class="r" style="left:13px;top:608px;width:997px;height:18px;background:linear-gradient(#ededed,#dadada);"></div>
<div class="r" style="left:13px;top:607.5px;width:997px;height:1px;background:#b8b8b8;"></div>
<div class="t" style="left:32.50px;top:612.82px;font-size:9.6px;line-height:9.6px;color:#555;">Готово</div>
<svg class="r" style="left:79px;top:610.5px;" width="14" height="13" viewBox="0 0 14 13" fill="none"><circle cx="3" cy="2.6" r="1.9" fill="#555"/><path d="M3.2 4 V9.8" stroke="#555" stroke-width="0.9"/><path d="M1 10.4 H8" stroke="#555" stroke-width="1.7"/><path d="M8 10.8 Q10.6 10.6 10.6 8.4 V2.2" stroke="#555" stroke-width="1"/><path d="M6.5 2.1 H12.4 V3.8" stroke="#555" stroke-width="1.1"/></svg>
<svg class="r" style="left:105px;top:610.3px;" width="14" height="13" viewBox="0 0 14 13" fill="none"><circle cx="5.9" cy="2" r="1.5" stroke="#555" stroke-width="0.85"/><path d="M0.9 3.9 Q0.5 4.9 1.5 5.2 L4.1 6 V8.6 L2.5 11.4 Q2.3 12.3 3.3 12.1 M7.7 6 L10.3 5.2 Q11.3 4.9 10.9 3.9 Q10.5 3.3 9.7 3.6 L7.5 4.2 H4.3 L2.1 3.6 Q1.3 3.3 0.9 3.9 M7.7 6 V7.8" stroke="#555" stroke-width="0.85" stroke-linejoin="round"/><path d="M6.3 9.9 L8.6 12.1 L12.7 7.8" stroke="#555" stroke-width="1.05"/></svg>
<div class="t" style="left:120.80px;top:612.82px;font-size:9.6px;line-height:9.6px;color:#555;letter-spacing:0.286px;">Специальные возможности: все в порядке</div>
<svg class="r" style="left:762px;top:612px;" width="12" height="11" viewBox="0 0 12 11" fill="none"><rect x="0.5" y="0.5" width="11" height="10" stroke="#6e6e6e"/><path d="M0.5 3.8 H11.5 M0.5 7.2 H11.5 M4.2 0.5 V10.5 M7.8 0.5 V10.5" stroke="#6e6e6e" stroke-width="0.9"/></svg>
<svg class="r" style="left:790.5px;top:612px;" width="12" height="11" viewBox="0 0 12 11" fill="none"><rect x="0.5" y="0.5" width="11" height="10" stroke="#6e6e6e"/><rect x="3" y="2.6" width="6" height="5.8" stroke="#6e6e6e" stroke-width="0.9"/></svg>
<svg class="r" style="left:818.5px;top:612px;" width="12" height="11" viewBox="0 0 12 11" fill="none"><rect x="0.5" y="0.5" width="11" height="10" stroke="#6e6e6e"/><path d="M4 0.5 V6.4 H8 V0.5" stroke="#6e6e6e" stroke-width="0.9"/></svg>
<div class="r" style="left:846px;top:616.8px;width:6px;height:1.6px;background:#555;"></div>
<div class="r" style="left:858px;top:616px;width:79px;height:3px;background:#9c9c9c;border-radius:2px"></div>
<div class="r" style="left:893.5px;top:611px;width:13px;height:13px;background:#fff;border-radius:50%;box-shadow:0 0.5px 1.5px rgba(0,0,0,.45)"></div>
<svg class="r" style="left:943px;top:614px;" width="7" height="7" viewBox="0 0 7 7" fill="none"><path d="M3.5 0 V7 M0 3.5 H7" stroke="#555" stroke-width="1.6"/></svg>
<div class="t" style="left:963.50px;top:613.15px;font-size:9.8px;line-height:9.8px;color:#555;letter-spacing:-0.272px;">125 %</div>
</div>
<div id="dlg"></div>
<div id="layer">
<div class="r" style="left:160px;top:87px;width:366px;height:22px;background:#f8f8f8;border-radius:10px 10px 0 0"></div>
<div class="r" style="left:160px;top:108.5px;width:366px;height:1px;background:#dedede;"></div>
<div class="t" style="left:322.70px;top:91.96px;font-size:10.5px;line-height:10.5px;color:#3a3a3a;font-weight:bold;letter-spacing:0.398px;">Макрос</div>
<div class="t" style="left:176.40px;top:126.41px;font-size:10.8px;line-height:10.8px;color:#262626;-webkit-text-stroke:0.2px #262626;letter-spacing:0.053px;">Имя макроса:</div>
<div class="r" style="left:177px;top:145px;width:333px;height:15.5px;background:#fff;box-shadow:0 0.5px 0 0.5px rgba(0,0,0,.13),0 1px 0 rgba(0,0,0,.12)"></div>
<div class="t" style="left:179.70px;top:147.21px;font-size:10.8px;line-height:10.8px;color:#1c1c1c;-webkit-text-stroke:0.2px #1c1c1c;letter-spacing:-0.102px;">HyperSsylka</div>
<svg class="r" style="left:496px;top:147px;" width="12" height="11" viewBox="0 0 12 11" fill="none"><rect x="0.5" y="0.5" width="11" height="10" fill="#fff" stroke="#9aa4b0"/><path d="M0.5 3.8 H11.5 M0.5 7.2 H11.5 M4.2 0.5 V10.5 M7.8 0.5 V10.5" stroke="#b9c2cc" stroke-width="0.8"/><rect x="0.5" y="0.5" width="4" height="3.2" fill="#4f81bd"/><rect x="7.8" y="7.2" width="3.7" height="3.3" fill="#b8cfe8"/><path d="M4.6 3.6 L8.4 4.6 L7.2 5.6 L8.8 7.4 L7.8 8.2 L6.2 6.4 L5.2 7.6 Z" fill="#c8312b"/></svg>
<div class="r" style="left:174px;top:165px;width:339px;height:65px;background:#8dbca2;border-radius:3.5px"></div>
<div class="r" style="left:177px;top:167.5px;width:333px;height:60.5px;background:#fff;"></div>
<div class="r" style="left:177px;top:167.5px;width:333px;height:15.5px;background:#0b6433;"></div>
<div class="t" style="left:183.00px;top:170.31px;font-size:10.8px;line-height:10.8px;color:#fff;-webkit-text-stroke:0.2px #fff;letter-spacing:-0.012px;">HyperSsylka</div>
<div class="t" style="left:183.00px;top:185.61px;font-size:10.8px;line-height:10.8px;color:#1c1c1c;-webkit-text-stroke:0.2px #1c1c1c;letter-spacing:0.023px;">HyperSsylkaSelect</div>
<div class="r" style="left:176px;top:234.5px;width:33px;height:16.5px;background:#f6f6f6;border:1px solid #d3d3d3"></div>
<div class="r" style="left:192px;top:234.5px;width:1px;height:16.5px;background:#d3d3d3;"></div>
<svg class="r" style="left:180px;top:238.5px;" width="9" height="9" viewBox="0 0 9 9" fill="none"><path d="M4.5 0.4 V8.6 M0.4 4.5 H8.6" stroke="#c4c4c4" stroke-width="1"/></svg>
<svg class="r" style="left:196px;top:238.5px;" width="9" height="9" viewBox="0 0 9 9" fill="none"><path d="M0.4 4.5 H8.6" stroke="#333" stroke-width="1.1"/></svg>
<div class="t" style="left:176.40px;top:266.41px;font-size:10.8px;line-height:10.8px;color:#262626;-webkit-text-stroke:0.2px #262626;letter-spacing:0.111px;">Макросы из:</div>
<div class="r" style="left:246.5px;top:263.5px;width:252px;height:15.5px;background:#fff;border-radius:4.5px;box-shadow:0 0 0 0.5px rgba(0,0,0,.07),0 0.5px 1.5px rgba(0,0,0,.22)"></div>
<div class="t" style="left:253.40px;top:265.41px;font-size:10.8px;line-height:10.8px;color:#1c1c1c;-webkit-text-stroke:0.2px #1c1c1c;letter-spacing:0.149px;">Все открытые книги</div>
<div class="r" style="left:484.7px;top:264.8px;width:13.3px;height:13px;background:linear-gradient(#2f8f5c,#1b7042);border-radius:3.5px"></div>
<svg class="r" style="left:487.3px;top:266.3px;" width="8" height="10" viewBox="0 0 8 10" fill="none"><path d="M1.4 3.6 L4 1.2 L6.6 3.6 M1.4 6.4 L4 8.8 L6.6 6.4" stroke="#fff" stroke-width="1.3" stroke-linecap="round" stroke-linejoin="round"/></svg>
<div class="r" style="left:172px;top:291px;width:345px;height:1px;background:#dcdcdc;"></div>
<div class="t" style="left:176.40px;top:303.11px;font-size:10.8px;line-height:10.8px;color:#262626;-webkit-text-stroke:0.2px #262626;letter-spacing:0.013px;">Описание:</div>
<div class="r" style="left:427.5px;top:301.8px;width:82.5px;height:15.5px;background:#fff;border-radius:4.5px;box-shadow:0 0 0 0.5px rgba(0,0,0,.07),0 0.5px 1.5px rgba(0,0,0,.22)"></div>
<div class="t" style="left:435.80px;top:304.01px;font-size:10.8px;line-height:10.8px;color:#1c1c1c;-webkit-text-stroke:0.2px #1c1c1c;letter-spacing:-0.085px;">Параметры...</div>
<div class="r" style="left:175.5px;top:368.8px;width:84px;height:16px;background:#fff;border-radius:4.5px;box-shadow:0 0 0 0.5px rgba(0,0,0,.07),0 0.5px 1.5px rgba(0,0,0,.22)"></div>
<div class="t" style="left:198.40px;top:371.41px;font-size:10.8px;line-height:10.8px;color:#1c1c1c;-webkit-text-stroke:0.2px #1c1c1c;letter-spacing:-0.110px;">Отмена</div>
<div class="r" style="left:274.5px;top:368.8px;width:73px;height:16px;background:#fff;border-radius:4.5px;box-shadow:0 0 0 0.5px rgba(0,0,0,.07),0 0.5px 1.5px rgba(0,0,0,.22)"></div>
<div class="t" style="left:301.50px;top:371.41px;font-size:10.8px;line-height:10.8px;color:#1c1c1c;-webkit-text-stroke:0.2px #1c1c1c;letter-spacing:0.078px;">Шаг</div>
<div class="r" style="left:356.7px;top:368.8px;width:72.3px;height:16px;background:#fff;border-radius:4.5px;box-shadow:0 0 0 0.5px rgba(0,0,0,.07),0 0.5px 1.5px rgba(0,0,0,.22)"></div>
<div class="t" style="left:368.30px;top:371.41px;font-size:10.8px;line-height:10.8px;color:#1c1c1c;-webkit-text-stroke:0.2px #1c1c1c;letter-spacing:0.012px;">Изменить</div>
<div class="r" style="left:438.2px;top:368.8px;width:72.2px;height:16px;background:linear-gradient(#30915f,#1a6f41);border-radius:4.5px;box-shadow:0 0.5px 1.5px rgba(0,0,0,.3)"></div>
<div class="t" style="left:446.40px;top:371.41px;font-size:10.8px;line-height:10.8px;color:#fff;-webkit-text-stroke:0.2px #fff;">Выполнить</div>
<svg class="r" style="left:802.6px;top:358.6px;" width="11" height="15" viewBox="0 0 11 15" fill="none"><path d="M1.2 1 V11.8 L3.8 9.4 L5.8 13.8 L7.6 13 L5.7 8.8 H9.2 Z" fill="#000" stroke="#fff" stroke-width="0.9" stroke-linejoin="round"/></svg>
</div>
</body></html>
